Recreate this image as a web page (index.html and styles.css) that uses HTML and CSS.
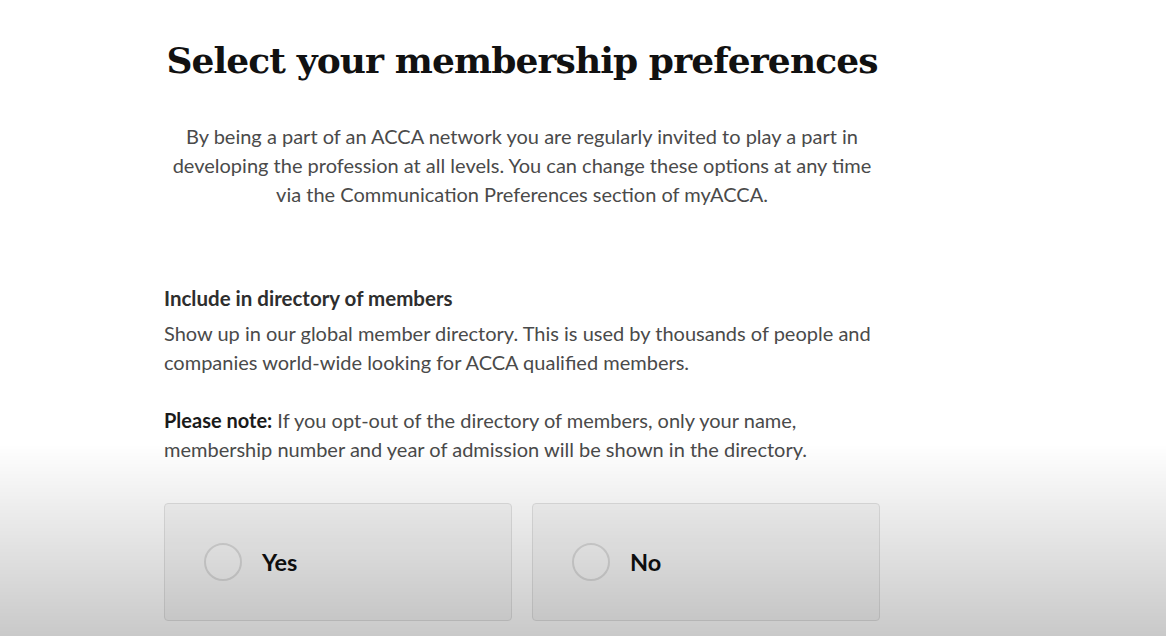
FILE: index.html
```html
<!DOCTYPE html>
<html lang="en">
<head>
<meta charset="UTF-8" />
<title>Membership preferences</title>
<link rel="stylesheet" href="styles.css">
</head>
<body>

<main class="page">
  <h1 class="title">Select your membership preferences</h1>

  <p class="intro">
    By being a part of an ACCA network you are regularly invited to play a part in<br>
    developing the profession at all levels. You can change these options at any time<br>
    via the Communication Preferences section of myACCA.
  </p>

  <section class="pref">
    <h2 class="pref-title">Include in directory of members</h2>
    <p class="pref-text">Show up in our global member directory. This is used by thousands of people and<br>
      companies world-wide looking for ACCA qualified members.</p>
    <p class="pref-text"><strong>Please note:</strong> If you opt-out of the directory of members, only your name,<br>
      membership number and year of admission will be shown in the directory.</p>

    <div class="options">
      <label class="option">
        <span class="radio"></span>
        <span class="option-label">Yes</span>
      </label>
      <label class="option">
        <span class="radio"></span>
        <span class="option-label">No</span>
      </label>
    </div>
  </section>
</main>

<div class="fade"></div>

</body>
</html>
```

FILE: styles.css
```css
body { margin: 0; background: #fff; font-family: Lato, "Open Sans", sans-serif; color: #4a4a4a; }
.page { width: 716px; margin-left: 164px; padding-top: 34px; }

.title {
  font-family: "DejaVu Serif", serif;
  font-weight: bold; font-size: 36px; line-height: 52px; white-space: nowrap;
  color: #111; text-align: center; margin: 0; letter-spacing: -0.9px;
}

.intro { text-align: center; font-size: 20px; line-height: 29px; margin: 36px 0 0; white-space: nowrap; }

.pref { margin-top: 75px; }
.pref-title { font-size: 20.5px; font-weight: bold; color: #2e2e2e; margin: 0; line-height: 29px; }
.pref-text { font-size: 20px; line-height: 29px; margin: 6px 0 29px; white-space: nowrap; }
.pref-text strong { color: #1a1a1a; }

.options { display: flex; gap: 20px; margin-top: 39px; }
.option {
  flex: 1; height: 118px; display: flex; align-items: center;
  padding-left: 39px; box-sizing: border-box;
  background: #f7f7f7; border: 1px solid #e2e2e2; border-radius: 4px;
}
.radio { width: 34px; height: 34px; border: 2px solid #dcdcdc; border-radius: 50%; background: #fafafa; }
.option-label { margin-left: 20px; font-size: 23.5px; font-weight: bold; color: #111; }

.fade {
  position: fixed; left: 0; right: 0; bottom: 0; height: 192px;
  background: linear-gradient(to bottom, rgba(0,0,0,0), rgba(0,0,0,0.21));
  pointer-events: none;
}
```
